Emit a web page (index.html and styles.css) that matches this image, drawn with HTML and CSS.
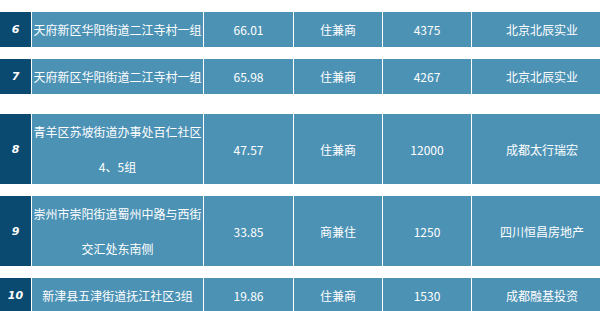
FILE: index.html
```html
<!DOCTYPE html>
<html lang="zh">
<head>
<meta charset="utf-8">
<link rel="stylesheet" href="styles.css">
</head>
<body>
<div class="list">
  <div class="row">
    <div class="cell num">6</div>
    <div class="cell">天府新区华阳街道二江寺村一组</div>
    <div class="cell">66.01</div>
    <div class="cell">住兼商</div>
    <div class="cell">4375</div>
    <div class="cell">北京北辰实业</div>
  </div>
  <div class="row">
    <div class="cell num">7</div>
    <div class="cell">天府新区华阳街道二江寺村一组</div>
    <div class="cell">65.98</div>
    <div class="cell">住兼商</div>
    <div class="cell">4267</div>
    <div class="cell">北京北辰实业</div>
  </div>
  <div class="row row-wide-gap">
    <div class="cell num">8</div>
    <div class="cell">青羊区苏坡街道办事处百仁社区<br>4、5组</div>
    <div class="cell">47.57</div>
    <div class="cell">住兼商</div>
    <div class="cell">12000</div>
    <div class="cell">成都太行瑞宏</div>
  </div>
  <div class="row">
    <div class="cell num">9</div>
    <div class="cell">崇州市崇阳街道蜀州中路与西街<br>交汇处东南侧</div>
    <div class="cell">33.85</div>
    <div class="cell">商兼住</div>
    <div class="cell">1250</div>
    <div class="cell">四川恒昌房地产</div>
  </div>
  <div class="row">
    <div class="cell num">10</div>
    <div class="cell">新津县五津街道抚江社区3组</div>
    <div class="cell">19.86</div>
    <div class="cell">住兼商</div>
    <div class="cell">1530</div>
    <div class="cell">成都融基投资</div>
  </div>
</div>
</body>
</html>
```
FILE: styles.css
```css
html, body {
  margin: 0;
  padding: 0;
  background: #ffffff;
}
body {
  width: 600px;
  height: 311px;
  overflow: hidden;
  font-family: "Noto Sans CJK SC", "Noto Sans", sans-serif;
  font-size: 12px;
  color: #ffffff;
}
.list {
  display: flex;
  flex-direction: column;
  gap: 12px;
  padding-top: 12px;
}
.row {
  display: grid;
  grid-template-columns: 31px 171px 89px 88px 88px 140px;
  column-gap: 1px;
}
.row-wide-gap {
  margin-top: 8px;
}
.cell {
  background: #4c92b5;
  line-height: 35px;
  text-align: center;
  white-space: nowrap;
  display: flex;
  align-items: center;
  justify-content: center;
  text-align: center;
}
.num {
  background: #0b4a70;
  font-family: "DejaVu Sans", sans-serif;
  font-weight: bold;
  font-style: italic;
  font-size: 11px;
}
```
